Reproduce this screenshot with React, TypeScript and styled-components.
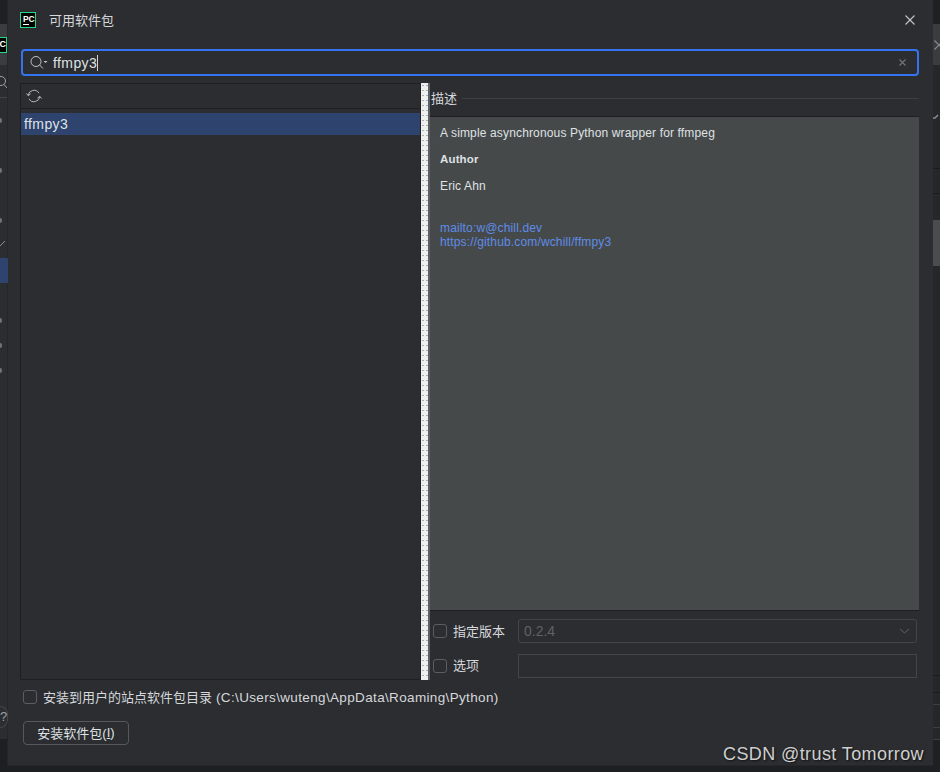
import React from "react";
import styled, { createGlobalStyle } from "styled-components";

const Global = createGlobalStyle`
  html, body { margin: 0; padding: 0; background: #1f2023; }
  body { font-family: "Liberation Sans", "Noto Sans CJK SC", sans-serif; }
`;

const UI = `"Liberation Sans", "Noto Sans CJK SC", sans-serif`;

const Page = styled.div`
  width: 940px;
  height: 772px;
  position: relative;
  overflow: hidden;
  display: flex;
  align-items: flex-start;
  background: #1e1f22;
`;

const LeftStrip = styled.div`
  width: 8px;
  height: 772px;
  flex: none;
  display: flex;
  flex-direction: column;
  background: #2b2d30;
  overflow: hidden;
`;

const StripTop = styled.div`
  height: 24px;
  flex: none;
  background: #1f2023;
`;

const StripHeader = styled.div`
  height: 41px;
  flex: none;
  background: #3a3c40;
  display: flex;
  align-items: center;
  justify-content: flex-end;
  padding-right: 1px;
`;

const MiniLogo = styled.div`
  width: 16px;
  height: 16px;
  flex: none;
  box-sizing: border-box;
  background: #000;
  border: 1px solid #21d789;
  color: #fff;
  font: bold 9px/12px ${UI};
  text-align: right;
  padding-right: 0;
`;

const StripSearch = styled.div`
  height: 33px;
  flex: none;
  border-bottom: 1px solid #43454a;
  display: flex;
  align-items: center;
  box-sizing: border-box;
  padding-top: 2px;
`;

const StripRows = styled.div`
  position: relative;
  flex: 1;
  border-bottom: 1px solid #1e1f22;
`;

const StripBottom = styled.div`
  height: 32px;
  flex: none;
  background: #1e1f22;
`;

const Chevron = styled.div<{ $top: number }>`
  position: absolute;
  left: 0;
  top: ${(p) => p.$top}px;
  width: 2px;
  height: 5px;
  background: #6f737a;
  border-radius: 0 3px 3px 0;
`;

const Selected = styled.div`
  position: absolute;
  left: 0;
  top: 160px;
  width: 8px;
  height: 25px;
  background: #2e436e;
`;

const Tick = styled.svg`
  position: absolute;
  left: 0;
  top: 142px;
`;

const HelpBadge = styled.div`
  position: absolute;
  left: 0;
  top: 608px;
  width: 8px;
  height: 22px;
  box-sizing: border-box;
  border: 1px solid #43454a;
  border-left: none;
  border-radius: 0 11px 11px 0;
  color: #9da0a8;
  font: 13px/20px ${UI};
  text-align: left;
`;

const Dialog = styled.div`
  width: 925px;
  height: 765px;
  flex: none;
  background: #2b2d30;
  color: #dfe1e5;
  font: 13px ${UI};
  display: flex;
  flex-direction: column;
  box-shadow: 0 0 0 1px #25262a;
`;

const TitleBar = styled.div`
  height: 40px;
  flex: none;
  display: flex;
  align-items: center;
  padding: 0 18px 0 12px;
`;

const Logo = styled.div`
  width: 16px;
  height: 16px;
  flex: none;
  box-sizing: border-box;
  background: #000;
  border: 1px solid #21d789;
  display: flex;
  flex-direction: column;
  padding: 2px 1px 0 2px;
`;

const LogoMark = styled.span`
  color: #fff;
  font: bold 8.5px/8px ${UI};
  letter-spacing: -0.2px;
`;

const LogoBar = styled.span`
  display: block;
  width: 6px;
  height: 1px;
  background: #fff;
  margin-top: 1px;
`;

const Title = styled.div`
  margin-left: 13px;
  padding-bottom: 2px;
  font-size: 13px;
  flex: 1;
  color: #d6d8dc;
`;

const CloseIcon = styled.svg`
  display: block;
  flex: none;
`;

const SearchField = styled.div`
  height: 27px;
  box-sizing: border-box;
  margin: 9px 14px 0 13px;
  flex: none;
  border: 2px solid #3574f0;
  border-radius: 4px;
  display: flex;
  align-items: center;
  padding: 0 11px 0 7px;
  color: #dfe1e5;
`;

const SearchText = styled.div`
  margin-left: 5px;
  flex: 1;
  display: flex;
  align-items: center;
  font-size: 14px;
  letter-spacing: 0.4px;
`;

const Caret = styled.span`
  display: inline-block;
  width: 1px;
  height: 16px;
  background: #d0d2d6;
`;

const Body = styled.div`
  height: 597px;
  margin-top: 7px;
  flex: none;
  display: flex;
  padding-left: 12px;
`;

const ListPane = styled.div`
  width: 401px;
  box-sizing: border-box;
  flex: none;
  border: 1px solid #1e1f22;
  display: flex;
  flex-direction: column;
`;

const ListToolbar = styled.div`
  height: 24px;
  flex: none;
  border-bottom: 1px solid #1e1f22;
  display: flex;
  align-items: center;
  padding-left: 5px;
`;

const ListBody = styled.div`
  flex: 1;
  padding-top: 4px;
`;

const ListRow = styled.div`
  height: 22px;
  background: #2e436e;
  color: #dfe1e5;
  font-size: 14px;
  letter-spacing: 0.4px;
  line-height: 22px;
  padding-left: 3px;
`;

const Splitter = styled.div`
  width: 9px;
  flex: none;
  background-color: #eef0f0;
  background-image: radial-gradient(circle, #a9aeb2 0.7px, transparent 1px);
  background-size: 4px 5px;
  border-right: 2px solid #5d6064;
  box-sizing: border-box;
`;

const DetailPane = styled.div`
  width: 489px;
  flex: none;
  display: flex;
  flex-direction: column;
`;

const DetailHeading = styled.div`
  height: 33px;
  box-sizing: border-box;
  padding-bottom: 3px;
  flex: none;
  display: flex;
  align-items: center;
  gap: 5px;
  margin-left: 1px;
  font-size: 13px;
  color: #d6d8dc;
`;

const HeadingText = styled.span`
  padding-bottom: 2px;
`;

const HeadingRule = styled.div`
  flex: 1;
  height: 1px;
  background: #3d3f43;
`;

const DetailBox = styled.div`
  height: 495px;
  flex: none;
  background: #46494a;
  border-top: 1px solid #1e1f22;
  border-bottom: 1px solid #1e1f22;
  padding: 9px 10px;
  box-sizing: border-box;
  font-size: 12px;
  letter-spacing: 0.15px;
  color: #dfe1e5;
  line-height: 14px;
`;

const Paragraph = styled.p`
  margin: 0 0 12px;
`;

const Strong = styled.p`
  margin: 0 0 13px;
  font-weight: bold;
  font-size: 11.5px;
`;

const LinkBlock = styled.div`
  margin-top: 28px;
`;

const LinkLine = styled.div`
  color: #5f8ce8;
`;

const OptionRow = styled.div<{ $h: number }>`
  height: ${(p) => p.$h}px;
  flex: none;
  display: flex;
  align-items: center;
  padding: 0 2px 0 3px;
`;

const Check = styled.span`
  width: 14px;
  height: 14px;
  box-sizing: border-box;
  flex: none;
  display: block;
  border: 1px solid #5a5d63;
  border-radius: 3px;
`;

const OptionLabel = styled.span`
  width: 65px;
  flex: none;
  margin-left: 6px;
  padding-bottom: 2px;
  font-size: 13px;
  color: #d6d8dc;
`;

const VersionSelect = styled.div`
  flex: 1;
  height: 24px;
  box-sizing: border-box;
  border: 1px solid #43454a;
  border-radius: 3px;
  display: flex;
  align-items: center;
  justify-content: space-between;
  padding: 0 6px 0 5px;
  color: #5f6267;
  font-size: 14px;
`;

const OptionInput = styled.div`
  flex: 1;
  height: 24px;
  box-sizing: border-box;
  border: 1px solid #43454a;
`;

const Footer = styled.div`
  margin: 7px 0 0 15px;
  display: flex;
  flex-direction: column;
  align-items: flex-start;
`;

const UserRow = styled.div`
  display: flex;
  align-items: center;
  height: 20px;
  gap: 6px;
  font-size: 13px;
  color: #d6d8dc;
`;

const UserText = styled.span`
  padding-bottom: 2px;
`;

const PathText = styled.span`
  font-size: 13.5px;
  letter-spacing: 0.35px;
  margin-left: 4px;
`;

const InstallButton = styled.div`
  margin-top: 14px;
  width: 106px;
  height: 24px;
  box-sizing: border-box;
  border: 1px solid #55585d;
  border-radius: 4px;
  padding-bottom: 2px;
  display: flex;
  align-items: center;
  justify-content: center;
  font-size: 13px;
  color: #dfe1e5;
`;

const Mnemonic = styled.span`
  text-decoration: underline;
`;

const RightStrip = styled.div`
  flex: 1;
  height: 772px;
  display: flex;
  flex-direction: column;
  background: #25272a;
  overflow: hidden;
`;

const RightTop = styled.div`
  height: 24px;
  flex: none;
  background: #1f2023;
`;

const RightHeader = styled.div`
  height: 41px;
  flex: none;
  background: #3a3c40;
  display: flex;
  align-items: center;
  padding-left: 1px;
`;

const RightRow = styled.div<{ $h: number; $line?: string }>`
  height: ${(p) => p.$h}px;
  flex: none;
  box-sizing: border-box;
  border-bottom: 1px solid ${(p) => p.$line ?? "#1a1b1d"};
  display: flex;
  align-items: center;
`;

const RightScroll = styled.div`
  height: 46px;
  flex: none;
  background: #4a4c50;
`;

const RightFill = styled.div`
  flex: 1;
  background: #1e2024;
`;

const RightGap = styled.div<{ $h: number }>`
  height: ${(p) => p.$h}px;
  flex: none;
`;

const Watermark = styled.div`
  position: absolute;
  right: 16px;
  bottom: 7px;
  font: 18px ${UI};
  letter-spacing: 0.4px;
  color: #cfcfcf;
  text-shadow: 1px 1px 2px #111;
`;

const X = ({ s, c }: { s: number; c: string }) => (
  <CloseIcon width={s} height={s} viewBox={`0 0 ${s} ${s}`} fill="none">
    <path d={`M.5 .5L${s - 0.5} ${s - 0.5}M${s - 0.5} .5L.5 ${s - 0.5}`} stroke={c} strokeWidth="1.1" />
  </CloseIcon>
);

export default function App() {
  return (
    <Page>
      <Global />
      <LeftStrip>
        <StripTop />
        <StripHeader>
          <MiniLogo>C</MiniLogo>
        </StripHeader>
        <StripSearch>
          <svg width="8" height="14" viewBox="0 0 8 14" fill="none">
            <circle cx="1" cy="6" r="4.5" stroke="#9da0a8" />
            <path d="M4 9.5L7 13" stroke="#9da0a8" />
          </svg>
        </StripSearch>
        <StripRows>
          <Chevron $top={20} />
          <Chevron $top={70} />
          <Chevron $top={120} />
          <Chevron $top={220} />
          <Chevron $top={245} />
          <Chevron $top={270} />
          <Tick width="7" height="7" viewBox="0 0 7 7" fill="none">
            <path d="M0 6L5 1" stroke="#8a8d93" />
          </Tick>
          <Selected />
          <HelpBadge>?</HelpBadge>
        </StripRows>
        <StripBottom />
      </LeftStrip>
      <Dialog>
        <TitleBar>
          <Logo>
            <LogoMark>PC</LogoMark>
            <LogoBar />
          </Logo>
          <Title>可用软件包</Title>
          <X s={10} c="#c5c7cb" />
        </TitleBar>
        <SearchField>
          <svg width="18" height="15" viewBox="0 0 18 15" fill="none">
            <circle cx="6" cy="6.5" r="5" stroke="#c0c3c9" />
            <path d="M9.6 10L13 13.5" stroke="#c0c3c9" />
            <path d="M13.5 6h4l-2 2z" fill="#c0c3c9" />
          </svg>
          <SearchText>
            ffmpy3
            <Caret />
          </SearchText>
          <X s={7} c="#72757b" />
        </SearchField>
        <Body>
          <ListPane>
            <ListToolbar>
              <svg width="16" height="16" viewBox="0 0 16 16" fill="none" stroke="#b4b8bf" strokeWidth="1">
                <path d="M2.2 7.5A5.8 5.8 0 0 1 13 5.2" />
                <path d="M13.8 8.5A5.8 5.8 0 0 1 3 10.8" />
                <path d="M0.5 5.5l1.8 2.2 2.2-1.8" />
                <path d="M15.5 10.5l-1.8-2.2-2.2 1.8" />
              </svg>
            </ListToolbar>
            <ListBody>
              <ListRow>ffmpy3</ListRow>
            </ListBody>
          </ListPane>
          <Splitter />
          <DetailPane>
            <DetailHeading>
              <HeadingText>描述</HeadingText>
              <HeadingRule />
            </DetailHeading>
            <DetailBox>
              <Paragraph>A simple asynchronous Python wrapper for ffmpeg</Paragraph>
              <Strong>Author</Strong>
              <Paragraph>Eric Ahn</Paragraph>
              <LinkBlock>
                <LinkLine>mailto:w@chill.dev</LinkLine>
                <LinkLine>https://github.com/wchill/ffmpy3</LinkLine>
              </LinkBlock>
            </DetailBox>
            <OptionRow $h={40}>
              <Check />
              <OptionLabel>指定版本</OptionLabel>
              <VersionSelect>
                0.2.4
                <svg width="11" height="6" viewBox="0 0 11 6" fill="none">
                  <path d="M1 1l4.5 4L10 1" stroke="#5f6267" />
                </svg>
              </VersionSelect>
            </OptionRow>
            <OptionRow $h={29}>
              <Check />
              <OptionLabel>选项</OptionLabel>
              <OptionInput />
            </OptionRow>
          </DetailPane>
        </Body>
        <Footer>
          <UserRow>
            <Check />
            <UserText>
              安装到用户的站点软件包目录
              <PathText>(C:\Users\wuteng\AppData\Roaming\Python)</PathText>
            </UserText>
          </UserRow>
          <InstallButton>
            安装软件包(<Mnemonic>I</Mnemonic>)
          </InstallButton>
        </Footer>
      </Dialog>
      <RightStrip>
        <RightTop />
        <RightHeader>
          <X s={10} c="#8a8d93" />
        </RightHeader>
        <RightRow $h={104}>
          <svg width="7" height="7" viewBox="0 0 7 7" fill="none">
            <path d="M0 5h2l3-3" stroke="#8a8d93" strokeWidth="1.5" />
          </svg>
        </RightRow>
        <RightRow $h={25} />
        <RightGap $h={26} />
        <RightScroll />
        <RightRow $h={410} $line="#1a1b1d" />
        <RightRow $h={17} $line="#1a1b1d" />
        <RightRow $h={12} $line="#3c3e42" />
        <RightRow $h={23} $line="#3c3e42" />
        <RightRow $h={12} $line="#3c3e42" />
        <RightFill />
      </RightStrip>
      <Watermark>CSDN @trust Tomorrow</Watermark>
    </Page>
  );
}
